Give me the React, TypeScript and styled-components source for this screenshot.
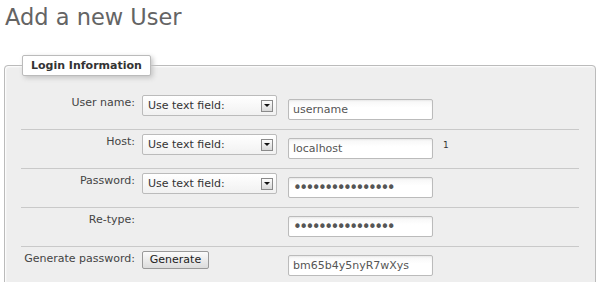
import React from 'react'
import styled, { createGlobalStyle } from 'styled-components'

const GlobalStyle = createGlobalStyle`
  html, body {
    margin: 0;
    padding: 0;
    background: #fff;
    font-family: "DejaVu Sans", Verdana, sans-serif;
    font-size: 11px;
    color: #444;
  }
`

const Page = styled.div`
  width: 598px;
  height: 282px;
  overflow: hidden;
`

const Title = styled.h2`
  margin: 0;
  padding: 4px 0 0 5px;
  font-size: 22.5px;
  font-weight: normal;
  line-height: 26px;
  color: #646464;
  text-shadow: 0 1px 0 #fff;
`

const Fieldset = styled.fieldset`
  box-sizing: border-box;
  width: 592px;
  margin: 25px 0 0 4px;
  padding: 15px 16px 0 16px;
  background: #eee;
  border: 1px solid #bbb;
  border-radius: 4px;
  box-shadow: 1px 1px 2px #fff inset;
  min-width: 0;
`

const Legend = styled.legend`
  margin-left: 1px;
  padding: 3px 8px;
  font-size: 11px;
  line-height: 13px;
  font-weight: bold;
  color: #333;
  background: #fff;
  border: 1px solid #bbb;
  border-radius: 2px;
  box-shadow: 2px 2px 5px #c4c4c4;
`

const Row = styled.div<{ $last?: boolean }>`
  display: flex;
  align-items: flex-start;
  padding: 4px 0 9px;
  border-bottom: ${p => (p.$last ? 'none' : '1px solid #c9c9c9')};
`

const Label = styled.label`
  width: 114px;
  flex: none;
  padding-top: 1px;
  text-align: right;
  line-height: 14px;
  color: #444;
`

const ControlCell = styled.div`
  width: 135px;
  flex: none;
  margin-left: 7px;
  min-height: 21px;
`

const Select = styled.div`
  box-sizing: border-box;
  display: flex;
  align-items: center;
  justify-content: space-between;
  width: 135px;
  height: 21px;
  padding: 0 3px 0 5px;
  background: linear-gradient(#fff, #f1f1f1);
  border: 1px solid #bbb;
  border-radius: 2px;
  color: #333;
  line-height: 19px;
`

const ArrowBox = styled.span`
  box-sizing: border-box;
  display: flex;
  align-items: center;
  justify-content: center;
  width: 12px;
  height: 12px;
  border: 1px solid #8a8a8a;
  background: linear-gradient(#fdfdfd, #d8d8d8);

  &::after {
    content: '';
    display: block;
    width: 0;
    height: 0;
    border-left: 3px solid transparent;
    border-right: 3px solid transparent;
    border-top: 3px solid #111;
  }
`

const Input = styled.input<{ $secret?: boolean }>`
  box-sizing: border-box;
  flex: none;
  width: 145px;
  height: 21px;
  margin: 4px 0 0 11px;
  padding: 0 4px;
  font-family: "DejaVu Sans", Verdana, sans-serif;
  font-size: ${p => (p.$secret ? '15px' : '11px')};
  letter-spacing: ${p => (p.$secret ? '-2.6px' : 'normal')};
  color: #555;
  background: linear-gradient(#f6f6f6, #fff 40%);
  border: 1px solid #bbb;
  border-radius: 2px;
  box-shadow: 0 1px 2px rgba(0, 0, 0, 0.06) inset;
  outline: none;
`

const Note = styled.span`
  margin: 5px 0 0 10px;
  font-size: 9px;
  line-height: 12px;
  color: #333;
`

const Button = styled.button`
  box-sizing: border-box;
  width: 67px;
  height: 18px;
  padding: 0;
  font-family: "DejaVu Sans", Verdana, sans-serif;
  font-size: 11px;
  line-height: 16px;
  color: #222;
  background: linear-gradient(#fbfbfb, #dcdcdc);
  border: 1px solid #999;
  border-radius: 2px;
`

const SelectField = () => (
  <Select>
    <span>Use text field:</span>
    <ArrowBox />
  </Select>
)

const App = () => {
  return (
    <Page>
      <GlobalStyle />
      <Title>Add a new User</Title>
      <Fieldset>
        <Legend>Login Information</Legend>
        <Row>
          <Label>User name:</Label>
          <ControlCell>
            <SelectField />
          </ControlCell>
          <Input defaultValue="username" />
        </Row>
        <Row>
          <Label>Host:</Label>
          <ControlCell>
            <SelectField />
          </ControlCell>
          <Input defaultValue="localhost" />
          <Note>1</Note>
        </Row>
        <Row>
          <Label>Password:</Label>
          <ControlCell>
            <SelectField />
          </ControlCell>
          <Input $secret type="password" defaultValue="bm65b4y5nyR7wXys" />
        </Row>
        <Row>
          <Label>Re-type:</Label>
          <ControlCell />
          <Input $secret type="password" defaultValue="bm65b4y5nyR7wXys" />
        </Row>
        <Row $last>
          <Label>Generate password:</Label>
          <ControlCell>
            <Button type="button">Generate</Button>
          </ControlCell>
          <Input defaultValue="bm65b4y5nyR7wXys" />
        </Row>
      </Fieldset>
    </Page>
  )
}

export default App
